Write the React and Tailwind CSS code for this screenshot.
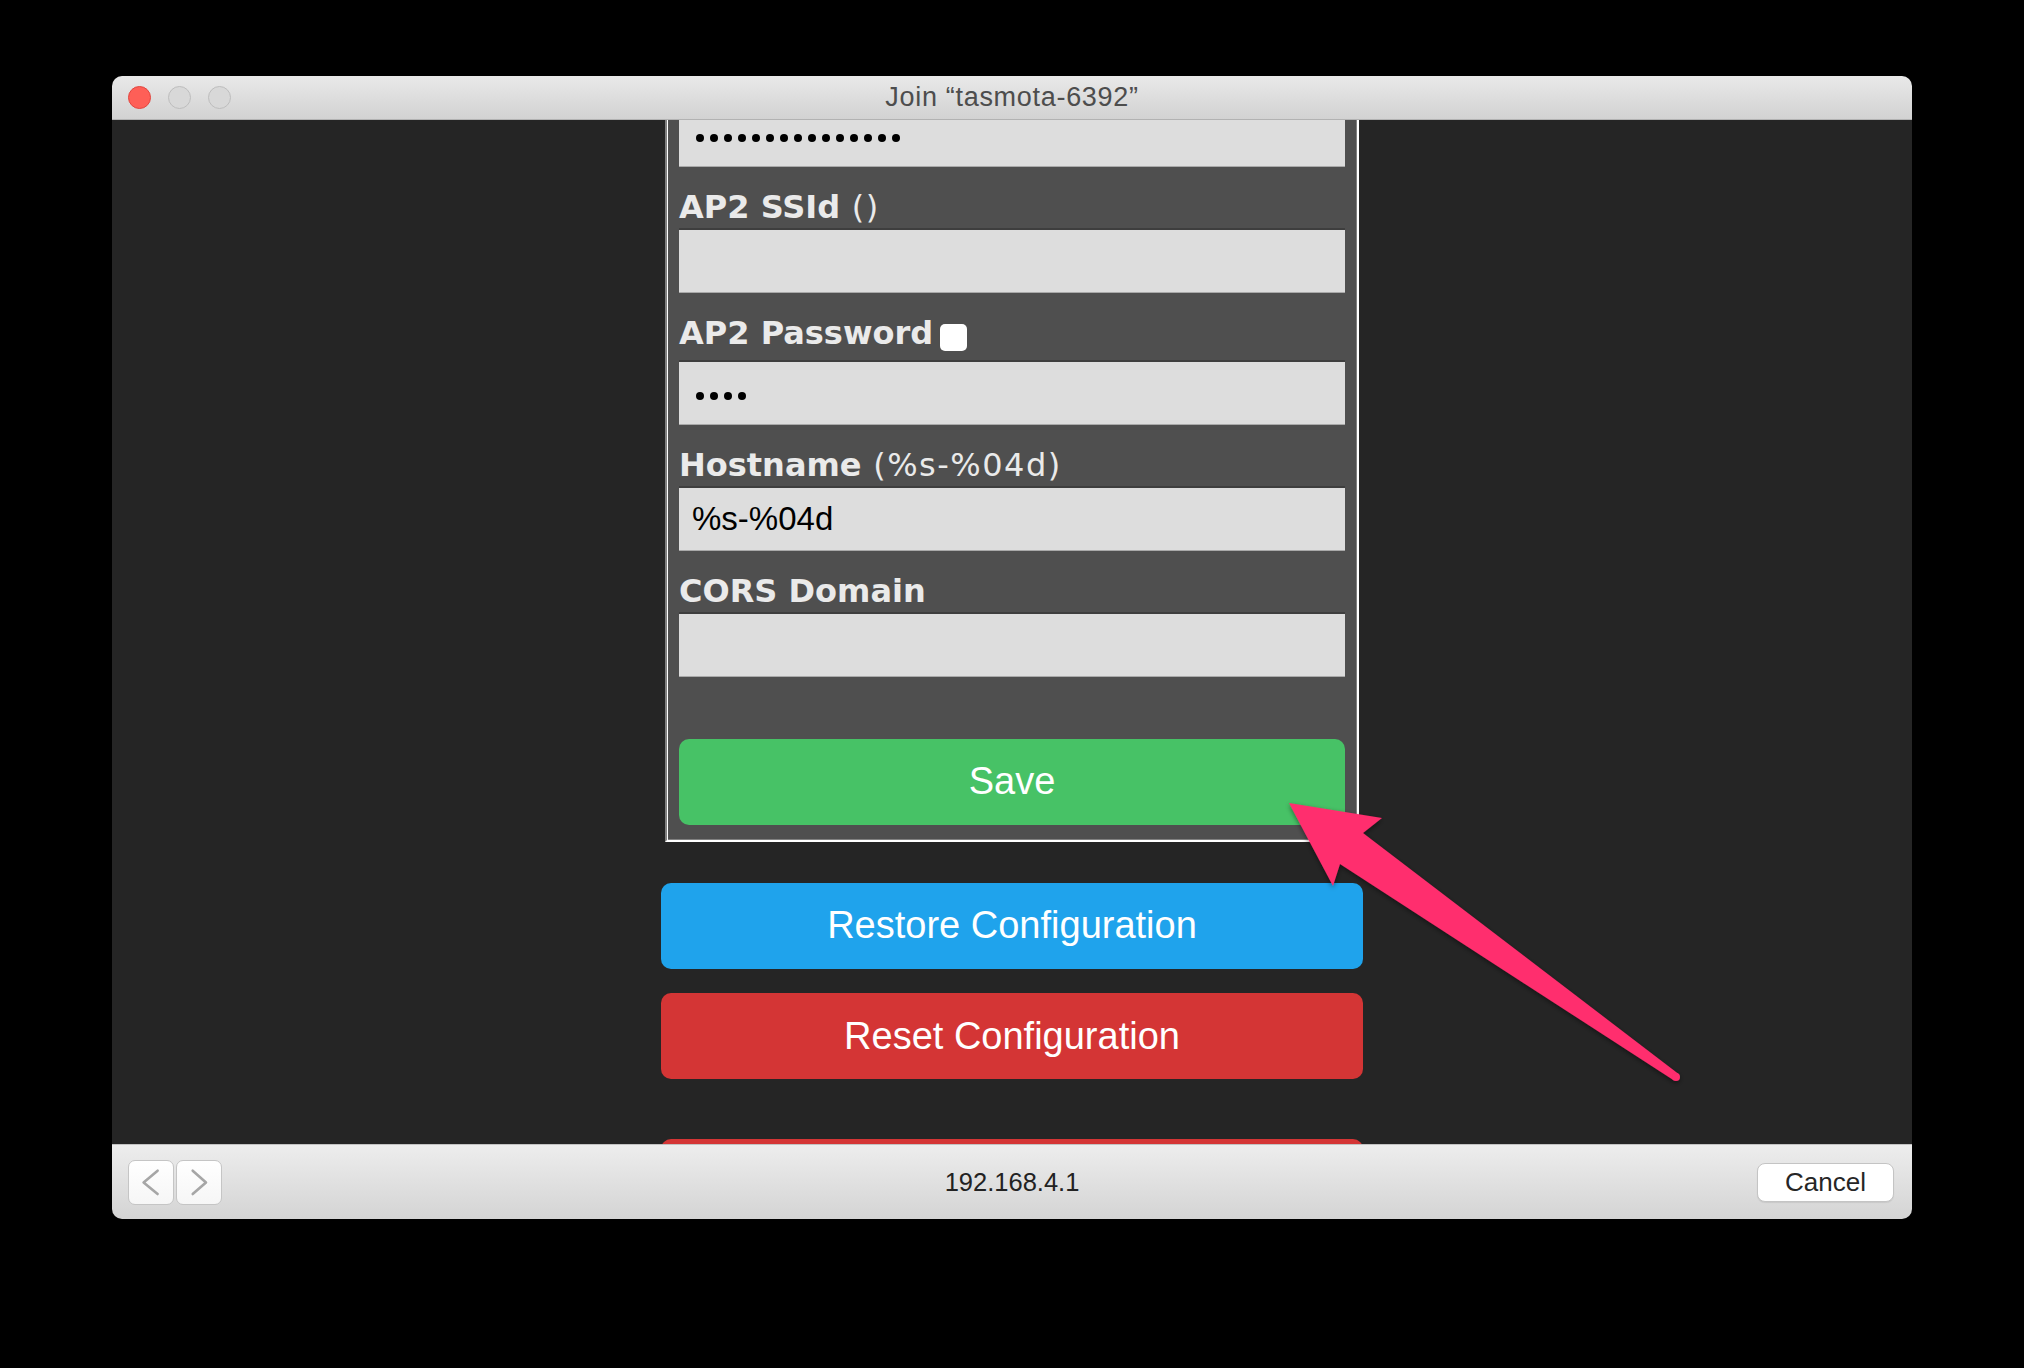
import React from "react";

const sans = "[font-family:'Liberation_Sans',Arial,sans-serif]";
const verd = "[font-family:'DejaVu_Sans',Verdana,sans-serif]";

function Dots({ n }) {
  return (
    <div className="flex items-center gap-[6px] pl-[17px] pt-[7px]">
      {Array.from({ length: n }).map((_, i) => (
        <span key={i} className="w-[8px] h-[8px] rounded-full bg-black" />
      ))}
    </div>
  );
}

function Input({ children }) {
  return (
    <div className="h-[65px] bg-[#dddddd] border-t-[2px] border-t-[#3e3e3e] border-b border-b-[#a9a9a9] flex items-center">
      {children}
    </div>
  );
}

function Label({ children }) {
  return (
    <div className={`mt-[22px] h-[37px] leading-[37px] text-[32px] text-[#eaeaea] whitespace-nowrap ${verd}`}>
      {children}
    </div>
  );
}

export default function App() {
  return (
    <div className="relative w-[2024px] h-[1368px] bg-black overflow-hidden">
      <div className="pt-[76px] pl-[112px]">
        <div className="w-[1800px] h-[1143px] rounded-[10px] overflow-hidden flex flex-col">
          {/* Title bar */}
          <div className="h-[44px] shrink-0 grid grid-cols-[1fr_auto_1fr] items-center bg-linear-to-b from-[#e9e9e9] to-[#d2d2d2] border-b border-b-[#b2b2b2]">
            <div className="flex items-center gap-[17px] pl-[16px]">
              <span className="w-[23px] h-[23px] rounded-full bg-[#fe5f57] border border-[#e1463f]" />
              <span className="w-[23px] h-[23px] rounded-full bg-[#d8d8d8] border border-[#bdbdbd]" />
              <span className="w-[23px] h-[23px] rounded-full bg-[#d8d8d8] border border-[#bdbdbd]" />
            </div>
            <div className={`text-[27px] tracking-[0.7px] text-[#4d4d4d] whitespace-nowrap ${sans}`}>
              Join “tasmota-6392”
            </div>
            <div />
          </div>

          {/* Content */}
          <div className="flex-1 bg-[#252525] overflow-hidden flex justify-center items-start">
            <div className="w-[702px] -mt-[30.3px] flex flex-col shrink-0">
              <div className="mx-[4px] bg-[#4f4f4f] border-2 border-t-[#808080] border-l-[#808080] border-b-white border-r-white shadow-[inset_1px_1px_0_#ffffff,inset_-1px_-1px_0_#808080] px-[12px] pt-[10px] pb-[15px] flex flex-col">
                <Input>
                  <Dots n={15} />
                </Input>

                <Label>
                  <b className="font-bold">AP2 SSId</b>
                  <span className="tracking-[1.5px]"> ()</span>
                </Label>
                <div className="mt-[2px]">
                  <Input />
                </div>

                <div className={`mt-[22px] h-[43px] flex items-start text-[32px] text-[#eaeaea] whitespace-nowrap ${verd}`}>
                  <b className="font-bold leading-[37px]">AP2 Password</b>
                  <span className="ml-[7px] mt-[9.3px] w-[27px] h-[27px] rounded-[5px] bg-white" />
                </div>
                <div className="mt-[2px]">
                  <Input>
                    <Dots n={4} />
                  </Input>
                </div>

                <Label>
                  <b className="font-bold">Hostname</b>
                  <span className="tracking-[1.5px]"> (%s-%04d)</span>
                </Label>
                <div className="mt-[2px]">
                  <Input>
                    <span className={`pl-[13px] text-[33px] text-black ${sans}`}>%s-%04d</span>
                  </Input>
                </div>

                <Label>
                  <b className="font-bold">CORS Domain</b>
                </Label>
                <div className="mt-[2px]">
                  <Input />
                </div>

                <div className={`mt-[62px] h-[86px] rounded-[10px] bg-[#47c266] text-white text-[38px] flex items-center justify-center ${sans}`}>
                  Save
                </div>
              </div>

              <div className={`mt-[41px] h-[86px] rounded-[10px] bg-[#1fa3ec] text-white text-[38px] flex items-center justify-center ${sans}`}>
                Restore Configuration
              </div>
              <div className={`mt-[24.6px] h-[86px] rounded-[10px] bg-[#d43535] text-white text-[38px] flex items-center justify-center ${sans}`}>
                Reset Configuration
              </div>
              <div className="mt-[60px] h-[86px] rounded-[10px] bg-[#d43535]" />
            </div>
          </div>

          {/* Bottom bar */}
          <div className="h-[75px] shrink-0 grid grid-cols-[1fr_auto_1fr] items-center bg-linear-to-b from-[#ededed] to-[#d4d4d4] border-t border-t-[#c2c2c2]">
            <div className="flex items-center gap-[2px] pl-[16px]">
              <div className="w-[46px] h-[45px] rounded-[7px] bg-linear-to-b from-white to-[#f6f6f6] border border-[#c5c5c5]">
                <svg width="44" height="43" viewBox="0 0 44 43" className="block">
                  <polyline points="28.6,9.7 14.6,21.4 28.6,33" fill="none" stroke="#a6a6a6" strokeWidth="2.6" strokeLinecap="round" strokeLinejoin="round" />
                </svg>
              </div>
              <div className="w-[46px] h-[45px] rounded-[7px] bg-linear-to-b from-white to-[#f6f6f6] border border-[#c5c5c5]">
                <svg width="44" height="43" viewBox="0 0 44 43" className="block">
                  <polyline points="15.7,9.7 29,21.4 15.7,33" fill="none" stroke="#a6a6a6" strokeWidth="2.6" strokeLinecap="round" strokeLinejoin="round" />
                </svg>
              </div>
            </div>
            <div className={`text-[25.5px] text-[#222222] ${sans}`}>192.168.4.1</div>
            <div className="flex justify-end pr-[18px]">
              <div className={`w-[137px] h-[39px] rounded-[8px] bg-white border border-[#c4c4c4] shadow-[0_1px_1px_rgba(0,0,0,0.08)] flex items-center justify-center text-[26px] text-[#262626] ${sans}`}>
                Cancel
              </div>
            </div>
          </div>
        </div>
      </div>

      {/* Annotation arrow */}
      <svg
        className="absolute inset-0 pointer-events-none"
        width="2024"
        height="1368"
        viewBox="0 0 2024 1368"
      >
        <defs>
          <filter id="sh" x="-10%" y="-10%" width="120%" height="120%">
            <feDropShadow dx="0" dy="2" stdDeviation="2.5" floodColor="#000" floodOpacity="0.45" />
          </filter>
        </defs>
        <g filter="url(#sh)" fill="#ff2d6e">
          <polygon points="1289,803 1382,818 1363,833 1678.3,1073.7 1673.7,1080.3 1340,864 1333,886" />
          <circle cx="1676" cy="1077" r="4" />
        </g>
      </svg>
    </div>
  );
}
